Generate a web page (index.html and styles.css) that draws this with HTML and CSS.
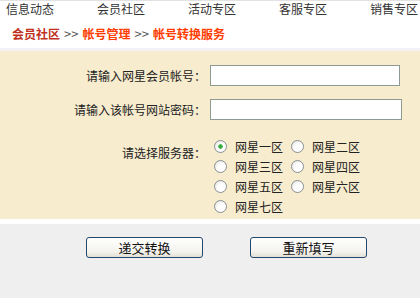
FILE: index.html
```
<!DOCTYPE html>
<html lang="zh-CN">
<head>
  <meta charset="UTF-8" />
  <title>帐号转换服务</title>
  <link rel="stylesheet" href="styles.css">
</head>
<body>

  <div class="topnav">
    <a href="#">信息动态</a>
    <a href="#">会员社区</a>
    <a href="#">活动专区</a>
    <a href="#">客服专区</a>
    <a href="#">销售专区</a>
  </div>

  <div class="crumb">
    <span class="crumb-home">会员社区</span>
    <span class="crumb-sep">&gt;&gt;</span>
    <span class="crumb-cur">帐号管理</span>
    <span class="crumb-sep">&gt;&gt;</span>
    <span class="crumb-cur">帐号转换服务</span>
  </div>

  <form class="form-panel">
    <label class="field-label" for="account">请输入网星会员帐号：</label>
    <input class="text-input" type="text" id="account" />

    <label class="field-label" for="password">请输入该帐号网站密码：</label>
    <input class="text-input wide" type="password" id="password" />

    <div class="field-label server-label">请选择服务器：</div>
    <div class="server-list">
      <label class="server"><input type="radio" name="server" checked /><span>网星一区</span></label>
      <label class="server"><input type="radio" name="server" /><span>网星二区</span></label>
      <label class="server"><input type="radio" name="server" /><span>网星三区</span></label>
      <label class="server"><input type="radio" name="server" /><span>网星四区</span></label>
      <label class="server"><input type="radio" name="server" /><span>网星五区</span></label>
      <label class="server"><input type="radio" name="server" /><span>网星六区</span></label>
      <label class="server"><input type="radio" name="server" /><span>网星七区</span></label>
    </div>
  </form>

  <div class="actions">
    <button type="button" class="btn">递交转换</button>
    <button type="button" class="btn">重新填写</button>
  </div>

</body>
</html>
```

FILE: styles.css
```
body {
  margin: 0;
  padding: 0;
  font-family: "Noto Sans CJK SC", "DejaVu Sans", sans-serif;
  font-size: 12px;
  color: #000;
  background: #efefef;
  height: 298px;
  overflow: hidden;
}

.topnav {
  display: grid;
  grid-template-columns: repeat(4, 91px) auto;
  padding-left: 6px;
  height: 17px;
  background: #fff;
  border-top: 1px solid #e2e2e2;
}

.topnav a {
  color: #333;
  text-decoration: none;
  line-height: 15px;
  white-space: nowrap;
}

.crumb {
  display: flex;
  align-items: center;
  gap: 4px;
  height: 30px;
  padding-left: 12px;
  background: #fff;
  font-weight: bold;
  border-bottom: 3px solid #f2f2f6;
}

.crumb-home {
  color: #c0301c;
}

.crumb-sep {
  color: #555;
  font-weight: normal;
  font-size: 13px;
}

.crumb-cur {
  color: #ff3c00;
}

.form-panel {
  display: grid;
  grid-template-columns: 206px 1fr;
  column-gap: 4px;
  row-gap: 13px;
  align-items: center;
  margin: 0;
  padding: 14px 0 3px;
  background: #f7ecce;
  border-bottom: 5px solid #fff;
}

.field-label {
  text-align: right;
  color: #222;
  white-space: nowrap;
}

.text-input {
  box-sizing: border-box;
  width: 190px;
  height: 21px;
  border: 1px solid #8e9b92;
  background: #fff;
  padding: 0 3px;
  font: inherit;
}

.text-input.wide {
  width: 192px;
}

.server-label {
  align-self: start;
  line-height: 20px;
  margin-top: 10px;
}

.server-list {
  display: grid;
  grid-template-columns: repeat(2, 77px);
  margin-top: 3px;
}

.server {
  display: flex;
  align-items: center;
  gap: 8px;
  height: 20px;
  padding-left: 4px;
  color: #222;
}

.server input {
  appearance: none;
  -webkit-appearance: none;
  box-sizing: border-box;
  width: 13px;
  height: 13px;
  margin: 0;
  border: 1px solid #8a8f95;
  border-radius: 50%;
  background: radial-gradient(circle at 65% 65%, #fff 40%, #dcdcd6 100%);
}

.server input:checked {
  background:
    radial-gradient(circle, #2f9a3a 0, #4cb84e 2px, transparent 2.6px),
    radial-gradient(circle at 65% 65%, #fff 40%, #dcdcd6 100%);
}

.actions {
  display: flex;
  gap: 47px;
  padding: 13px 0 0 86px;
}

.btn {
  box-sizing: border-box;
  width: 117px;
  height: 21px;
  padding: 0;
  border: 1px solid #23486e;
  border-radius: 3px;
  background: linear-gradient(#ffffff, #f4f3ee 70%, #e3e0d6);
  font-family: "Noto Sans CJK SC", "DejaVu Sans", sans-serif;
  font-size: 13px;
  font-weight: 400;
  line-height: 19px;
  color: #111;
  cursor: pointer;
}
```
